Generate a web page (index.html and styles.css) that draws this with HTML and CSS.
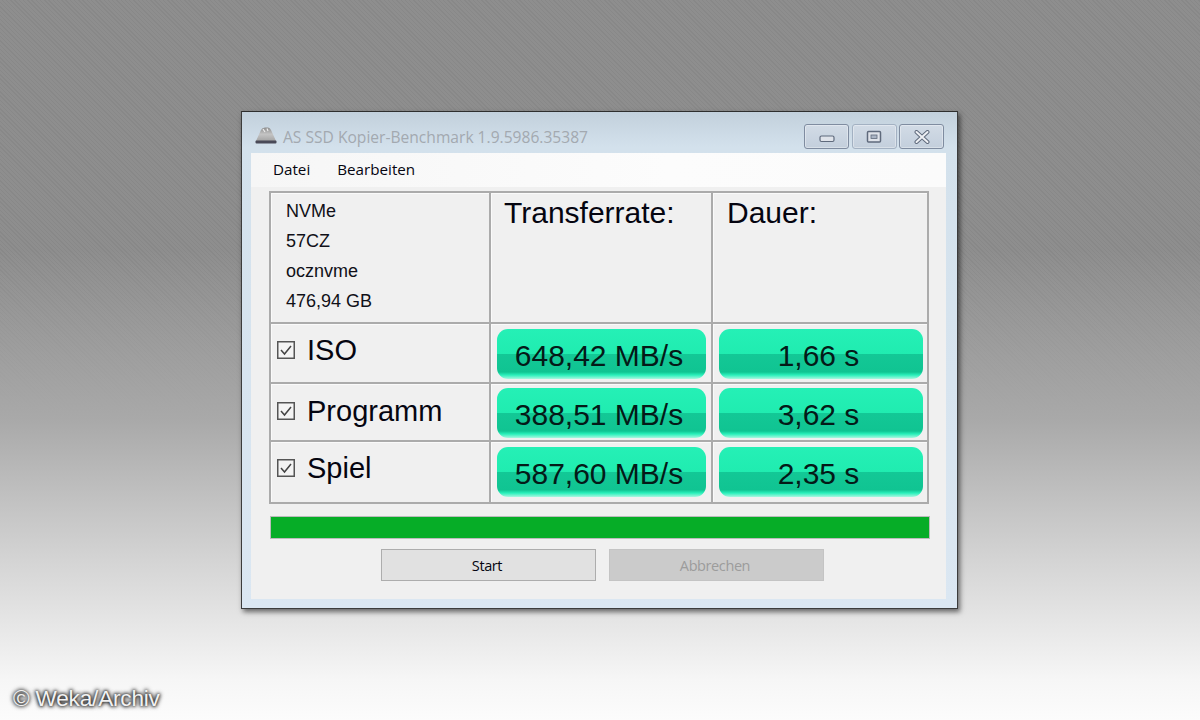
FILE: index.html
```html
<!DOCTYPE html>
<html lang="de">
<head>
<meta charset="utf-8">
<title>AS SSD Kopier-Benchmark</title>
<link rel="stylesheet" href="styles.css">
</head>
<body>
<div class="window">
  <div class="titlebar">
    <svg class="appicon" viewBox="0 0 22 18" width="22" height="18">
      <defs><linearGradient id="dome" x1="0" y1="0" x2="0" y2="1"><stop offset="0" stop-color="#8d8d8d"/><stop offset="0.5" stop-color="#c4c4c4"/><stop offset="1" stop-color="#a4a4a4"/></linearGradient></defs>
      <path d="M1 15 L6 4 Q7 1.500 10 1.500 L13 1.500 Q15 1.500 16 4 L21 15 Z" fill="url(#dome)"/>
      <path d="M8 3 L10 6 M12 2.500 L13 5" stroke="#eeeeee" stroke-width="1.200"/>
      <rect x="0.500" y="14.500" width="21" height="3" rx="1" fill="#4a4a58"/>
    </svg>
    <span class="title">AS SSD Kopier-Benchmark 1.9.5986.35387</span>
    <div class="controls">
      <div class="ctl"><svg class="ctl-min" viewBox="0 0 16 8" width="16" height="8"><rect x="1" y="1" width="14" height="5.500" rx="1.500" fill="#dfe3ea" stroke="#5f6a7c" stroke-width="1.200"/></svg></div>
      <div class="ctl ctl-mid"><svg viewBox="0 0 16 14" width="16" height="14"><rect x="1.500" y="1.500" width="13" height="10.500" rx="1" fill="#dfe3ea" stroke="#5f6a7c" stroke-width="1.500"/><rect x="5" y="5" width="6" height="3.500" fill="#aab4c4" stroke="#5f6a7c" stroke-width="0.800"/></svg></div>
      <div class="ctl"><svg viewBox="0 0 16 14" width="16" height="14"><path d="M2.500 2 L13.500 12 M13.500 2 L2.500 12" stroke="#5f6a7c" stroke-width="4" stroke-linecap="round"/><path d="M2.500 2 L13.500 12 M13.500 2 L2.500 12" stroke="#eef0f4" stroke-width="2" stroke-linecap="round"/></svg></div>
    </div>
  </div>
  <div class="client">
    <div class="menu"><span>Datei</span><span>Bearbeiten</span></div>
    <div class="content">
      <div class="table">
        <div class="cell info">
          <div>NVMe</div><div>57CZ</div><div>ocznvme</div><div>476,94 GB</div>
        </div>
        <div class="cell head head-t">Transferrate:</div>
        <div class="cell head">Dauer:</div>

        <div class="cell label"><span class="check"><svg viewBox="0 0 18 18" width="18" height="18"><rect x="0.750" y="0.750" width="16.500" height="16.500" fill="#f4f4f4" stroke="#555" stroke-width="1.500"/><path d="M4 9 L7.500 13 L14 5" fill="none" stroke="#444" stroke-width="1.500"/></svg></span>ISO</div>
        <div class="cell val"><div class="pill">648,42 MB/s</div></div>
        <div class="cell val"><div class="pill">1,66 s</div></div>

        <div class="cell label label-2"><span class="check"><svg viewBox="0 0 18 18" width="18" height="18"><rect x="0.750" y="0.750" width="16.500" height="16.500" fill="#f4f4f4" stroke="#555" stroke-width="1.500"/><path d="M4 9 L7.500 13 L14 5" fill="none" stroke="#444" stroke-width="1.500"/></svg></span>Programm</div>
        <div class="cell val val-2"><div class="pill">388,51 MB/s</div></div>
        <div class="cell val val-2"><div class="pill">3,62 s</div></div>

        <div class="cell label"><span class="check"><svg viewBox="0 0 18 18" width="18" height="18"><rect x="0.750" y="0.750" width="16.500" height="16.500" fill="#f4f4f4" stroke="#555" stroke-width="1.500"/><path d="M4 9 L7.500 13 L14 5" fill="none" stroke="#444" stroke-width="1.500"/></svg></span>Spiel</div>
        <div class="cell val"><div class="pill">587,60 MB/s</div></div>
        <div class="cell val"><div class="pill">2,35 s</div></div>
      </div>
      <div class="progress"></div>
      <div class="buttons">
        <div class="btn">Start</div>
        <div class="btn btn-off">Abbrechen</div>
      </div>
    </div>
  </div>
</div>
<div class="credit">© Weka/Archiv</div>
</body>
</html>
```
FILE: styles.css
```css
* { box-sizing: border-box; }
html, body { margin: 0; height: 100%; }
body {
  width: 1200px;
  height: 720px;
  overflow: hidden;
  padding: 111px 0 0 241px;
  font-family: "Liberation Sans", Arial, sans-serif;
  color: #050510;
  background:
    linear-gradient(180deg, rgba(140,140,140,0) 0, rgba(140,140,140,0) 250px, #a9a9a9 420px, #d4d4d4 560px, #f6f6f6 680px, #fcfcfc 720px),
    repeating-linear-gradient(45deg, #888888 0 1px, #8e8e8e 1px 3px);
}
.window {
  width: 717px;
  height: 498px;
  padding: 0 11px 9px 9px;
  display: flex;
  flex-direction: column;
  border: 1px solid #3c3c3c;
  border-top-color: #2e2e2e;
  background: linear-gradient(180deg, #c2d0dc 0, #d3e1ec 35px, #dbe7f2 100%);
  box-shadow: 2px 3px 5px rgba(0,0,0,0.55);
}
.titlebar {
  height: 41px;
  flex: none;
  display: flex;
  align-items: flex-start;
  padding-top: 14px;
}
.appicon { margin: 0 6px 0 4px; flex: none; }
.title {
  font-family: "Open Sans", "Liberation Sans", sans-serif;
  font-size: 15.600px;
  line-height: 22px;
  color: #a3a9b0;
  white-space: nowrap;
}
.controls {
  margin-left: auto;
  margin-top: -2px;
  margin-right: 2px;
  display: flex;
  gap: 2.500px;
}
.ctl {
  width: 45px;
  height: 25px;
  border: 1px solid #7f8ca0;
  border-radius: 3px;
  background: linear-gradient(180deg, #d2dbe6 0, #c3cfdc 100%);
  box-shadow: inset 0 0 0 1px rgba(255,255,255,0.35);
  display: flex;
  align-items: center;
  justify-content: center;
}
.ctl-min { margin-top: 4px; }
.ctl-mid { border-color: #a3b1c2; }
.client {
  flex: 1;
  display: flex;
  flex-direction: column;
  background: #f0f0f0;
}
.menu {
  height: 34px;
  flex: none;
  display: flex;
  gap: 27px;
  padding: 6px 0 0 22px;
  font-family: "Open Sans", "Liberation Sans", sans-serif;
  font-size: 15.200px;
  line-height: 21px;
  background: linear-gradient(90deg, #f6f6f6, #fcfcfc 60%, #fbfbfb);
}
.content { padding: 4px 15px 0 18px; }
.table {
  width: 660px;
  display: grid;
  grid-template-columns: 220px 222px 216px;
  grid-template-rows: 131px 60px 58px 62px;
  border-top: 2px solid #ababab;
  border-left: 2px solid #ababab;
  background: #f0f0f0;
}
.cell {
  border-right: 2px solid #ababab;
  border-bottom: 2px solid #ababab;
  box-shadow: inset 1px 1px 0 #fafafa;
  min-width: 0;
}
.info {
  padding: 3px 0 0 15px;
  font-size: 18px;
  line-height: 30px;
  color: #101018;
}
.head {
  padding: 3px 0 0 14px;
  font-size: 30px;
  line-height: 34px;
}
.head-t { padding-left: 13px; }
.label {
  display: flex;
  align-items: flex-start;
  padding: 6px 0 0 6px;
  font-size: 29px;
  line-height: 40px;
}
.label-2 { padding-top: 7px; }
.check { margin: 11px 12px 0 0; display: flex; flex: none; }
.val { padding: 5px 5px 0 6px; }
.val:nth-child(3n) { padding-right: 4px; }
.val-2 { padding-top: 4px; }
.pill {
  height: 50px;
  border-radius: 11px;
  display: flex;
  align-items: center;
  justify-content: center;
  padding: 4px 5px 0 0;
  font-size: 30px;
  color: #041a18;
  background: linear-gradient(180deg, #25f0b6 0, #20ecb0 50%, #13c896 50%, #10c492 86%, #28f0ba 92%, #aaf7e0 100%);
}
.progress {
  width: 660px;
  height: 23px;
  margin: 12px 0 0 1px;
  background: #06ad27;
  border: 1px solid #bcbcbc;
}
.buttons {
  display: flex;
  justify-content: center;
  gap: 13px;
  margin-top: 10px;
  padding-left: 4px;
}
.btn {
  width: 215px;
  height: 32px;
  padding-right: 2px;
  display: flex;
  align-items: center;
  justify-content: center;
  font-family: "Open Sans", "Liberation Sans", sans-serif;
  font-size: 14.500px;
  letter-spacing: -0.4px;
  background: #e1e1e1;
  border: 1px solid #adadad;
}
.btn-off {
  background: #cbcbcb;
  border-color: #c4c4c4;
  color: #9c9c9c;
}
.credit {
  position: absolute;
  left: 13px;
  top: 686px;
  font-size: 22.600px;
  line-height: 26px;
  letter-spacing: -0.2px;
  color: #f2f2f2;
  text-shadow: 0 0 3px #222, 0 0 4px #222, 0 0 5px #555;
}
```
